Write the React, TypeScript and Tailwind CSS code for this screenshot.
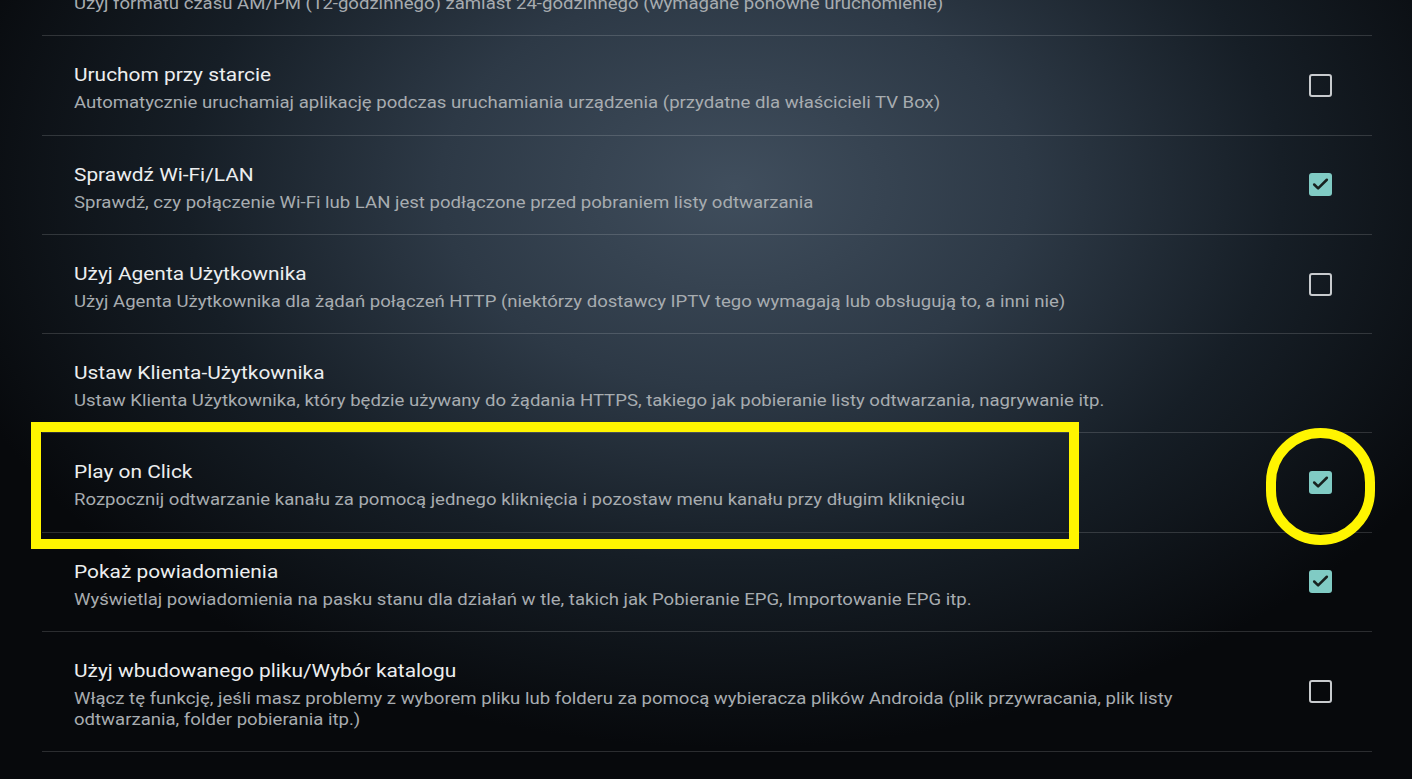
import { Check } from "lucide-react"

type Setting = {
  title: string
  desc: string
  checked?: boolean
}

const settings: Setting[] = [
  {
    title: "Format czasu 12-godzinny",
    desc: "Użyj formatu czasu AM/PM (12-godzinnego) zamiast 24-godzinnego (wymagane ponowne uruchomienie)",
  },
  {
    title: "Uruchom przy starcie",
    desc: "Automatycznie uruchamiaj aplikację podczas uruchamiania urządzenia (przydatne dla właścicieli TV Box)",
    checked: false,
  },
  {
    title: "Sprawdź Wi-Fi/LAN",
    desc: "Sprawdź, czy połączenie Wi-Fi lub LAN jest podłączone przed pobraniem listy odtwarzania",
    checked: true,
  },
  {
    title: "Użyj Agenta Użytkownika",
    desc: "Użyj Agenta Użytkownika dla żądań połączeń HTTP (niektórzy dostawcy IPTV tego wymagają lub obsługują to, a inni nie)",
    checked: false,
  },
  {
    title: "Ustaw Klienta-Użytkownika",
    desc: "Ustaw Klienta Użytkownika, który będzie używany do żądania HTTPS, takiego jak pobieranie listy odtwarzania, nagrywanie itp.",
  },
  {
    title: "Play on Click",
    desc: "Rozpocznij odtwarzanie kanału za pomocą jednego kliknięcia i pozostaw menu kanału przy długim kliknięciu",
    checked: true,
  },
  {
    title: "Pokaż powiadomienia",
    desc: "Wyświetlaj powiadomienia na pasku stanu dla działań w tle, takich jak Pobieranie EPG, Importowanie EPG itp.",
    checked: true,
  },
  {
    title: "Użyj wbudowanego pliku/Wybór katalogu",
    desc: "Włącz tę funkcję, jeśli masz problemy z wyborem pliku lub folderu za pomocą wybieracza plików Androida (plik przywracania, plik listy odtwarzania, folder pobierania itp.)",
    checked: false,
  },
]

function Checkbox({ checked }: { checked: boolean }) {
  if (checked) {
    return (
      <div className="flex h-[23px] w-[23px] items-center justify-center rounded-[3px] bg-[#80cbc4]">
        <Check className="h-[19px] w-[19px] text-[#17211f]" strokeWidth={3.2} />
      </div>
    )
  }
  return <div className="h-[23px] w-[23px] rounded-[3px] border-[2.5px] border-[#c8cbce]" />
}

function Row({ item, first }: { item: Setting; first?: boolean }) {
  return (
    <div
      className={
        "flex items-center border-b border-white/15 pl-8 pr-10" + (first ? " -mt-[63px]" : "")
      }
    >
      <div className="flex-1 pt-[27px] pb-[21.3px]">
        <div className="w-[1020px] origin-left scale-x-[1.16]">
          <p className="text-[18px] leading-[24px] text-[#eceeef]">{item.title}</p>
          <p className="mt-[5px] text-[16px] leading-[21px] text-[#a7acb0]">{item.desc}</p>
        </div>
      </div>
      {item.checked !== undefined ? <Checkbox checked={item.checked} /> : null}
    </div>
  )
}

export default function App() {
  return (
    <div
      className="relative h-[779px] w-[1412px] overflow-hidden bg-[radial-gradient(ellipse_58%_72%_at_52%_24%,#404e5d_0%,#2d3946_36%,#161e26_67%,#07090c_100%)]"
      style={{ fontFamily: "Roboto, 'Noto Sans', sans-serif" }}
    >
      <div className="ml-[42px] mr-[40px]">
        {settings.map((s, i) => (
          <Row key={s.title} item={s} first={i === 0} />
        ))}
      </div>

      {/* annotation overlay */}
      <div className="pointer-events-none absolute left-[31px] top-[422px] h-[127px] w-[1048px] border-[10px] border-[#fff500]" />
      <div className="pointer-events-none absolute left-[1266px] top-[428px] h-[117px] w-[109px] rounded-full border-[10px] border-[#fff500]" />
    </div>
  )
}
